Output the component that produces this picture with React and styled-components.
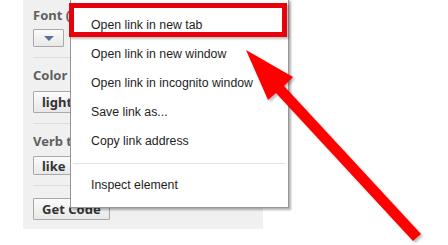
import styled, { createGlobalStyle } from "styled-components";

const GlobalStyle = createGlobalStyle`
    html, body {
        margin: 0;
        padding: 0;
        background: #ffffff;
    }
`;

const SPage = styled.div`
    position: relative;
    width: 448px;
    height: 245px;
    overflow: hidden;
    background: #ffffff;
    font-family: "Noto Sans", "Open Sans", sans-serif;
`;

const SPanel = styled.div`
    margin-left: 23px;
    width: 240px;
    height: 229px;
    padding: 6px 0 0 10px;
    box-sizing: border-box;
    background: #f0f0f0;
    display: flex;
    flex-direction: column;
`;

const SField = styled.div`
    display: flex;
    flex-direction: column;
    align-items: flex-start;
    gap: ${(p) => p.gap || 6}px;
    padding-bottom: ${(p) => p.pb || 10}px;
    margin-bottom: ${(p) => p.mb || 8}px;
    border-bottom: ${(p) => (p.last ? "none" : "1px solid #dcdcdc")};
`;

const SLabel = styled.span`
    font-size: 13px;
    font-weight: bold;
    color: #5f5f5f;
    white-space: nowrap;
    line-height: 18px;
    max-width: 38px;
    overflow: hidden;
`;

const SControl = styled.button`
    font-family: inherit;
    font-size: 13px;
    font-weight: bold;
    color: #333333;
    height: ${(p) => p.h || 22}px;
    width: ${(p) => (p.w ? p.w + "px" : "auto")};
    padding: 0 8px;
    display: flex;
    align-items: center;
    justify-content: ${(p) => (p.center ? "center" : "flex-start")};
    gap: 6px;
    border: 1px solid #a9a9a9;
    border-radius: 1px;
    background: linear-gradient(#fbfbfb, #e8e8e8);
`;

const STriangle = styled.span`
    width: 0;
    height: 0;
    border-left: 5px solid transparent;
    border-right: 5px solid transparent;
    border-top: 5px solid #56709a;
`;

const SMenu = styled.ul`
    position: absolute;
    left: 70px;
    top: -1px;
    width: 219px;
    box-sizing: border-box;
    margin: 0;
    padding: 11px 0 7px;
    list-style: none;
    background: #ffffff;
    border: 1px solid #979797;
    box-shadow: 2px 2px 2px rgba(0, 0, 0, 0.3);
    font-family: "Liberation Sans", Arial, sans-serif;
    font-size: 12.3px;
    color: #1e1e1e;
`;

const SItem = styled.li`
    height: 29px;
    line-height: 29px;
    padding-left: 20px;
    white-space: nowrap;
`;

const SSeparator = styled.li`
    height: 1px;
    margin: 7px 2px;
    background: #e3e3e3;
`;

const SHighlight = styled.div`
    position: absolute;
    left: 69px;
    top: 3px;
    width: 218px;
    height: 34px;
    box-sizing: border-box;
    border: 5px solid #e8000b;
    box-shadow: 2px 2px 2px rgba(0, 0, 0, 0.25);
`;

const SArrow = styled.svg`
    position: absolute;
    left: 0;
    top: 0;
    filter: drop-shadow(2px 2px 1px rgba(0, 0, 0, 0.25));
`;

const items = [
    "Open link in new tab",
    "Open link in new window",
    "Open link in incognito window",
    "Save link as...",
    "Copy link address",
];

function App() {
    return (
        <SPage>
            <GlobalStyle />
            <SPanel>
                <SField gap={5}>
                    <SLabel>Font (?)</SLabel>
                    <SControl w={31} h={18} center>
                        <STriangle />
                    </SControl>
                </SField>
                <SField gap={7}>
                    <SLabel>Color Scheme</SLabel>
                    <SControl w={60}>light</SControl>
                </SField>
                <SField gap={6} mb={12}>
                    <SLabel>Verb to display</SLabel>
                    <SControl h={19}>
                        like
                        <STriangle />
                    </SControl>
                </SField>
                <SField last>
                    <SControl>Get Code</SControl>
                </SField>
            </SPanel>

            <SMenu>
                {items.map((item) => (
                    <SItem key={item}>{item}</SItem>
                ))}
                <SSeparator />
                <SItem>Inspect element</SItem>
            </SMenu>

            <SHighlight />

            <SArrow width="448" height="245" viewBox="0 0 448 245">
                <polygon
                    fill="#ff0000"
                    points="246,50 293,77 284,86 421,234 413,241 276,93 268,100"
                />
            </SArrow>
        </SPage>
    );
}

export default App;
